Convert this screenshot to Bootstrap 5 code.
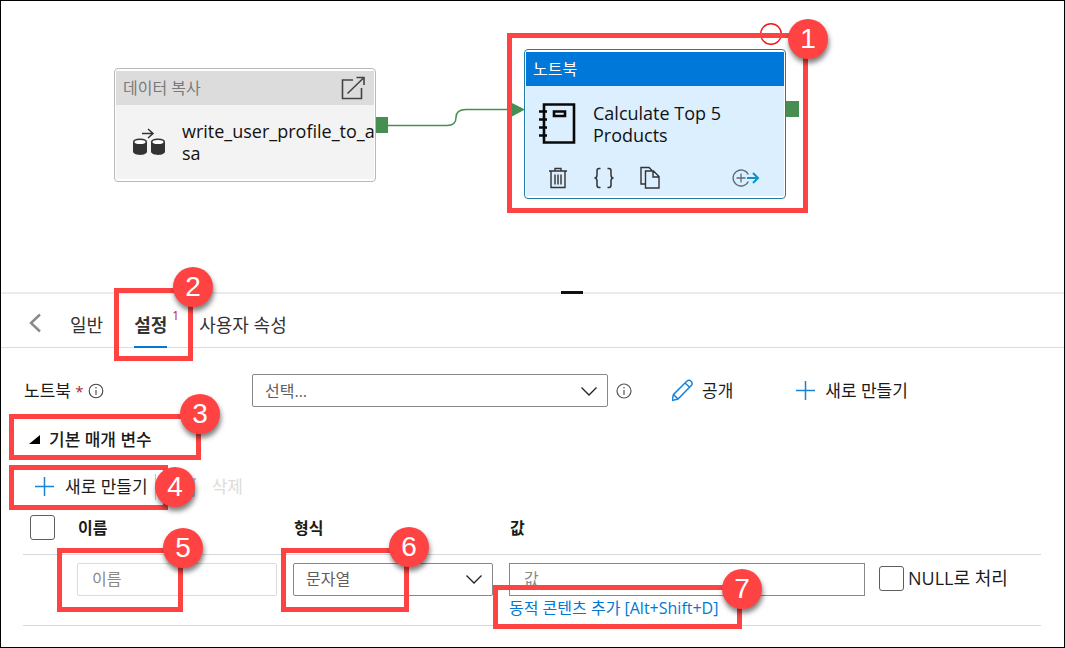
<!DOCTYPE html>
<html lang="ko">
<head>
<meta charset="utf-8">
<meta name="viewport" content="width=device-width, initial-scale=1">
<title>파이프라인 - 노트북 설정</title>
<link href="https://cdn.jsdelivr.net/npm/bootstrap@5.3.0/dist/css/bootstrap.min.css" rel="stylesheet">
<style>
  :root { --callout: #ff4343; --azure: #0078d4; --flow: #468f50; }
  body { font-family: "Open Sans", "Noto Sans CJK KR", sans-serif; font-size: 17px; line-height: 24px; color: #1b1b1b; background: #fff; }
  svg { display: block; flex: none; }
  .frame { border: 1px solid #000; min-height: 100vh; }

  /* pipeline canvas */
  .canvas { height: 291px; }
  .flow-line { left: 0; top: 0; }
  .activity { width: 262px; border: 1px solid #b8b8b8; border-radius: 4px; padding: 2px 1px; background: #fff; line-height: 22px; }
  .activity-head { height: 34px; padding: 0 8px 0 7px; background: #dcdcdc; color: #7a7a7a; font-size: 16px; }
  .activity-body { background: #f3f3f3; font-size: 18px; color: #111; }
  .activity-copy { left: 113px; top: 67px; }
  .activity-copy .activity-body { height: 74px; padding: 0 0 0 16px; gap: 16px; }
  .activity-note { left: 523px; top: 48px; border-color: #1f7fa3; }
  .activity-note .activity-head { background: #0078d9; color: #fff; }
  .activity-note .activity-body { background: #dceffe; height: 110px; padding: 16px 24px 7px 13px; }
  .icon-btn { border: 0; background: none; padding: 0; color: #333; }

  /* properties panel */
  .panel-top { border-top: 2px solid #ebebeb; }
  .grip { width: 22px; height: 3px; top: -3px; left: 50%; margin-left: 28px; background: #111; }
  .tabs { height: 54px; border-bottom: 1px solid #dcdcdc; font-size: 18px; padding-left: 27px; }
  .tabs button { border: 0; background: none; padding: 0; color: #333; }
  .tabs .tab-item { height: 44px; margin-top: 10px; border-bottom: 2px solid transparent; }
  .tabs .tab-on { font-weight: 700; border-color: var(--azure); margin-left: 31px; margin-right: 32px; }
  .tab-count { font: 12px "Open Sans", sans-serif; color: #c50f1f; left: 38px; top: 3px; }
  .panel-form { padding: 26px 23px 0 22px; }
  .star { color: #a4262c; font-size: 15px; }
  .label-col { width: 229px; padding-left: 1px; }
  .pick { width: 356px; }
  .form-select, .form-control { height: 33px; border: 1px solid #8a8886; border-radius: 2px; padding: 0 12px; font-size: 16px; color: #605e5c; background-color: #fff; }
  .form-control { padding: 0 14px; }
  .form-control::placeholder { color: #8a8886; }
  .form-select { background-image: url("data:image/svg+xml,%3Csvg xmlns='http://www.w3.org/2000/svg' viewBox='0 0 16 16'%3E%3Cpath fill='none' stroke='%23222' stroke-width='1.3' d='M.5 4.5 8 12l7.500-7.500'/%3E%3C/svg%3E"); background-position: right 10px center; background-size: 16px; }
  .cmd { border: 0; background: none; padding: 0; color: #1b1b1b; }
  .cmd:disabled { color: #dcdcdc; }
  .create-cmd { margin-left: 60px; }
  .section-toggle { margin: 21px 0 0 6px; font-weight: 500; }
  .toolbar { padding: 22px 0 0 12px; }
  .bar { width: 1px; height: 26px; background: #c8c8c8; margin: 0 24px 0 7px; }

  /* parameter table */
  .params { table-layout: fixed; margin-top: 2px; }
  .params th { height: 52px; padding: 0 2px 0 1px; border-bottom: 1px solid #d8d8d8; font-weight: 600; font-size: 16px; vertical-align: middle; }
  .params td { height: 71px; padding: 8px 16px 0 0; border-bottom: 1px solid #d8d8d8; vertical-align: top; }
  .params .pick-col { width: 54px; padding-left: 7px; }
  .params .wide-col { width: 216px; }
  .params .null-col { width: 162px; padding: 11px 0 0; }
  .params .name-box { border-color: #dcdcdc; }
  .params .value-box { border-radius: 0; }
  .params .value-cell { padding-right: 14px; }
  .form-check-input.tick { width: 25px; height: 25px; margin: 0; border: 1px solid #605e5c; border-radius: 3px; flex: none; }
  .dynamic { color: var(--azure); text-decoration: none; font-size: 16px; line-height: 24px; }
  .null-text { font-size: 18px; line-height: 25px; }

  /* numbered callouts drawn over the screen */
  .hilite { position: absolute; border: 5px solid var(--callout); pointer-events: none; }
  .pin { position: absolute; width: 40px; height: 40px; border-radius: 50%; background: var(--callout); color: #fff; font: 28px/40px "Liberation Sans", sans-serif; text-align: center; box-shadow: 1px 4px 5px rgba(0,0,0,.5); }
  .h1x { left: 507px; top: 33px; width: 301px; height: 180px; } .p1x { left: 788px; top: 19px; }
  .h2x { left: 114px; top: 288px; width: 79px; height: 73px; } .p2x { left: 173px; top: 267px; }
  .h3x { left: 9px; top: 414px; width: 192px; height: 46px; } .p3x { left: 180px; top: 394px; }
  .h4x { left: 9px; top: 465px; width: 159px; height: 45px; } .p4x { left: 155px; top: 467px; }
  .h5x { left: 57px; top: 548px; width: 126px; height: 64px; } .p5x { left: 163px; top: 528px; }
  .h6x { left: 281px; top: 548px; width: 128px; height: 64px; } .p6x { left: 389px; top: 527px; }
  .h7x { left: 493px; top: 585px; width: 249px; height: 44px; } .p7x { left: 722px; top: 569px; }
</style>
</head>
<body>
<div class="position-relative">
<main class="frame">
  <section class="canvas position-relative overflow-hidden" aria-label="파이프라인 캔버스">
    <svg class="flow-line position-absolute" width="820" height="220" fill="none">
      <path d="M387 124.500H446Q455 124.500 455 116.500Q455 108.500 465 108.500H512" stroke="#468f50" stroke-width="1.500"/>
      <path d="M375 116h12v16h-12zM511 102l13 6.500-13 7zM785 100h13v16h-13z" fill="#468f50"/>
      <circle cx="770" cy="33" r="10.300" stroke="#f01818" stroke-width="1.400"/>
    </svg>
    <article class="activity activity-copy position-absolute">
      <header class="activity-head d-flex align-items-center justify-content-between">
        <span>데이터 복사</span>
        <button class="icon-btn" aria-label="열기"><svg width="25" height="24" fill="none" stroke="#444" stroke-width="1.600"><path d="M12 4H1.500v18.500h19V12M6.500 17.500 23 1.500M15.500 1.500H23V9"/></svg></button>
      </header>
      <div class="activity-body d-flex align-items-center">
        <svg width="34" height="28" fill="none"><path d="M10 5.500h11M16 1l5 4.500L16 10" stroke="#333" stroke-width="1.500"/><path d="M1 14v9.500c0 4.500 14 4.500 14 0V14zM19 14v9.500c0 4.500 14 4.500 14 0V14z" fill="#333"/><ellipse cx="8" cy="14" rx="6.300" ry="2.800" fill="#fff" stroke="#333" stroke-width="1.500"/><ellipse cx="26" cy="14" rx="6.300" ry="2.800" fill="#fff" stroke="#333" stroke-width="1.500"/></svg>
        <span>write_user_profile_to_a<br>sa</span>
      </div>
    </article>
    <article class="activity activity-note position-absolute">
      <header class="activity-head d-flex align-items-center"><span>노트북</span></header>
      <div class="activity-body d-flex flex-column justify-content-between">
        <div class="d-flex gap-3">
          <svg width="38" height="43" fill="none" stroke="#080808"><path stroke-width="2.600" d="M5 2.500h30v38h-30z"/><path stroke-width="2.600" d="M15 9.500h11v4.500h-11z"/><path stroke-width="2.600" d="M0 9.500h8M0 17.500h8M0 25.500h8M0 33.500h8"/></svg>
          <span>Calculate Top 5<br>Products</span>
        </div>
        <div class="d-flex align-items-center ps-2">
          <button class="icon-btn me-4" aria-label="삭제"><svg width="22" height="22" fill="none" stroke="#333" stroke-width="1.400"><path d="M2 4h18M8 4V1.500h6V4M4 4v16.500h14V4M8 7.500v10M11 7.500v10M14 7.500v10"/></svg></button>
          <button class="icon-btn me-4" aria-label="코드"><svg width="22" height="22" fill="none" stroke="#333" stroke-width="1.500"><path d="M7.500 1.500H6Q4 1.500 4 4v4q0 3-2.500 3Q4 11 4 14v4q0 2.500 2 2.500h1.500M14.500 1.500H16q2 0 2 2.500v4q0 3 2.500 3Q18 11 18 14v4q0 2.500-2 2.500h-1.500"/></svg></button>
          <button class="icon-btn" aria-label="복제"><svg width="22" height="23" fill="none" stroke="#333" stroke-width="1.400"><path d="M6.500 18H2V1.500h8l3 3M6.500 5h8l5.500 5.500V22H6.500zM14 5v6h6"/></svg></button>
          <button class="icon-btn ms-auto" aria-label="출력 추가"><svg width="28" height="20" fill="none"><path d="M16.300 6.500A8 8 0 1 0 16.300 13.500M9 5.500v9M4.500 10h9" stroke="#5b6b7c" stroke-width="1.300"/><path d="M15 10h11M21 5l5 5-5 5" stroke="#0a93cf" stroke-width="2"/></svg></button>
        </div>
      </div>
    </article>
  </section>

  <section class="panel-top position-relative">
    <span class="grip position-absolute"></span>
    <nav class="tabs d-flex">
      <button class="me-4 pt-1" aria-label="이전"><svg width="18" height="20" fill="none" stroke="#8a8a8a" stroke-width="2.500"><path d="M12 1.500 3 10l9 8.500"/></svg></button>
      <button class="tab-item">일반</button>
      <button class="tab-item tab-on position-relative">설정<span class="tab-count position-absolute">1</span></button>
      <button class="tab-item">사용자 속성</button>
    </nav>

    <div class="panel-form">
      <div class="d-flex align-items-center">
        <div class="label-col d-flex align-items-center gap-1">
          <label for="notebook">노트북 <span class="star">*</span></label>
          <svg width="16" height="16" fill="none" stroke="#444" stroke-width="1.100"><circle cx="8" cy="8" r="6.800"/><path d="M8 7v5M8 4v1.500"/></svg>
        </div>
        <select id="notebook" class="form-select pick"><option>선택...</option></select>
        <svg class="ms-2" width="16" height="16" fill="none" stroke="#555" stroke-width="1.200"><circle cx="8" cy="8" r="7"/><path d="M8 7v5M8 4v1.500"/></svg>
        <button class="cmd d-flex align-items-center gap-2 ms-4 ps-3"><svg width="22" height="24" fill="none" stroke="#1683d8" stroke-width="1.500"><path d="M0 21.500l1.500-6L15 2q2-1.500 4 .3t.5 4L6 20zM1.500 15.500 6 20M13 4l5 4.500"/></svg>공개</button>
        <button class="cmd create-cmd d-flex align-items-center gap-2"><svg width="24" height="22" fill="none" stroke="#1683d8" stroke-width="1.500"><path d="M3 10.500h19M12.500 1v19"/></svg>새로 만들기</button>
      </div>

      <button class="cmd section-toggle d-flex align-items-center gap-2" aria-expanded="true"><svg width="12" height="10"><path d="M11 0v9H0z"/></svg>기본 매개 변수</button>

      <div class="toolbar d-flex align-items-center">
        <button class="cmd d-flex align-items-center gap-2"><svg width="22" height="22" fill="none" stroke="#1683d8" stroke-width="1.500"><path d="M0 10.500h19M9.500 1v19"/></svg>새로 만들기</button>
        <span class="bar"></span>
        <button class="cmd d-flex align-items-center gap-3" disabled><svg width="16" height="22" fill="none" stroke="#8cc3ee" stroke-width="1.400"><path d="M0 3h16M5 3V1h6v2M2 3v17h12V3M6 7v10M10 7v10"/></svg>삭제</button>
      </div>

      <table class="params w-100">
        <thead>
          <tr>
            <th class="pick-col"><input class="form-check-input tick d-block" type="checkbox" aria-label="모두 선택"></th>
            <th class="wide-col">이름</th><th class="wide-col">형식</th><th>값</th><th class="null-col"></th>
          </tr>
        </thead>
        <tbody>
          <tr>
            <td></td>
            <td><input class="form-control name-box" type="text" placeholder="이름" aria-label="이름"></td>
            <td><select class="form-select" aria-label="형식"><option>문자열</option></select></td>
            <td class="value-cell"><input class="form-control value-box" type="text" placeholder="값" aria-label="값"><a class="dynamic d-block" href="#">동적 콘텐츠 추가 [Alt+Shift+D]</a></td>
            <td class="null-col"><div class="d-flex gap-1"><input class="form-check-input tick" type="checkbox" id="asnull"><label class="null-text" for="asnull">NULL로 처리</label></div></td>
          </tr>
        </tbody>
      </table>
    </div>
  </section>
</main>

<div class="hilite h1x"></div><div class="hilite h2x"></div><div class="hilite h3x"></div><div class="hilite h4x"></div>
<div class="hilite h5x"></div><div class="hilite h6x"></div><div class="hilite h7x"></div>
<span class="pin p1x">1</span><span class="pin p2x">2</span><span class="pin p3x">3</span><span class="pin p4x">4</span>
<span class="pin p5x">5</span><span class="pin p6x">6</span><span class="pin p7x">7</span>
</div>
<script src="https://cdn.jsdelivr.net/npm/bootstrap@5.3.0/dist/js/bootstrap.bundle.min.js"></script>
</body>
</html>
